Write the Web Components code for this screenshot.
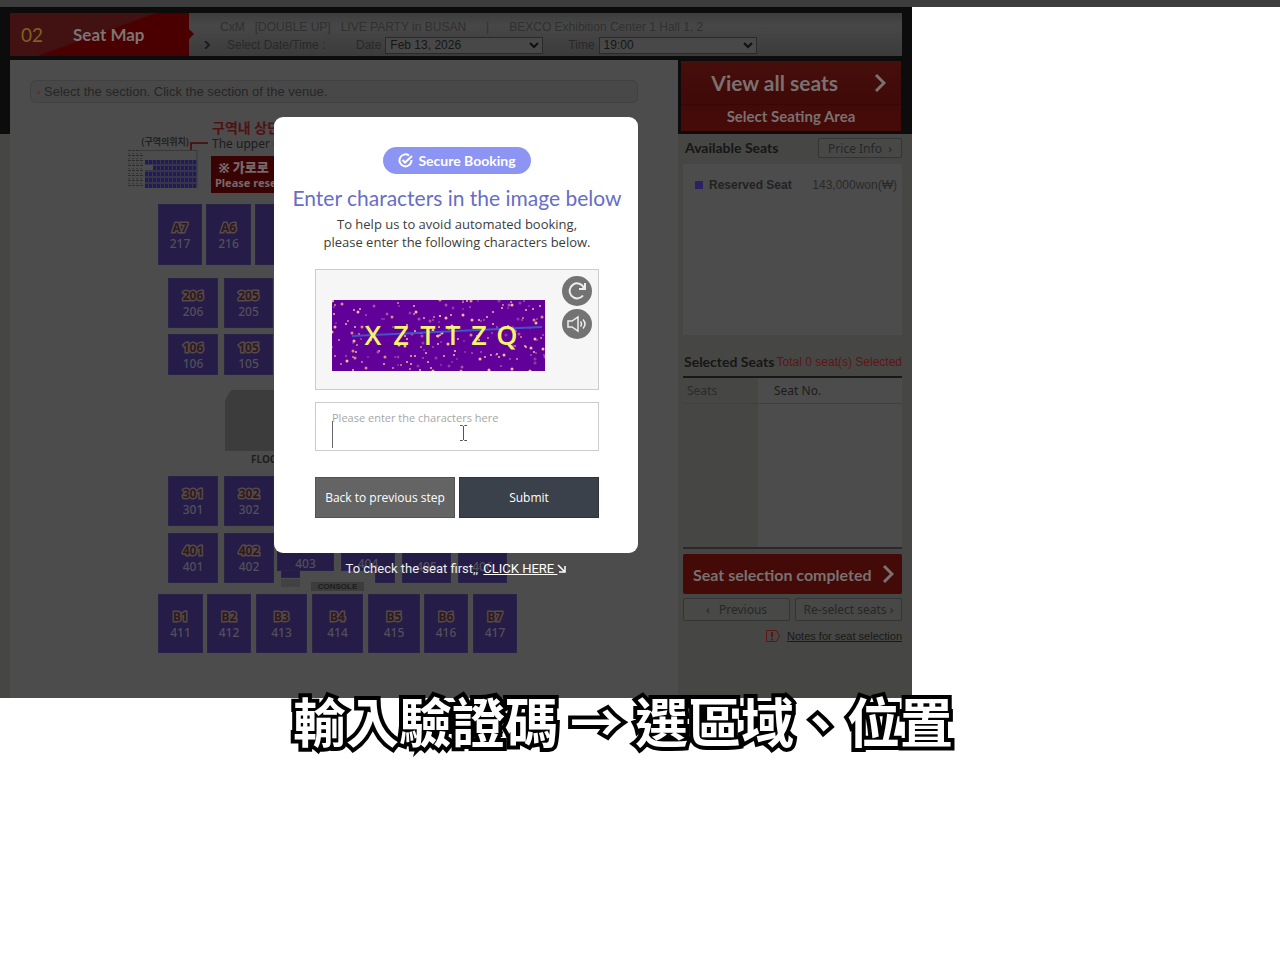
<!DOCTYPE html>
<html lang="en">
<head>
<meta charset="UTF-8">
<title>Seat Map</title>
<style>
  body {
    margin: 0;
    min-height: 100vh;
    background: #fff;
    font-family: "Liberation Sans", "Noto Sans CJK KR", sans-serif;
    font-size: 12px;
  }
</style>
</head>
<body>
<booking-page>
  <booking-header slot="header"></booking-header>
  <seat-plan slot="plan"></seat-plan>
  <seat-sidebar slot="side"></seat-sidebar>
  <captcha-dialog slot="dialog"></captcha-dialog>
  <video-caption slot="caption">輸入驗證碼 → 選區域、位置</video-caption>
</booking-page>

<script>
// page frame: strip on top, window on the left, overlay and caption over it
class BookingPage extends HTMLElement {
  constructor() {
    super();
    this.attachShadow({ mode: "open" });
    this.shadowRoot.innerHTML = `
      <style>
        :host { display: block; }
        .strip { height: 7px; background: #3d3d3d; }
        .window {
          position: relative;
          width: 71.25%;
          background: linear-gradient(#0c0c0c 127px, #464645 127px);
        }
        .body {
          display: grid;
          grid-template-columns: 1fr 234px;
          margin-left: 10px;
          min-height: 638px;
        }
        .overlay {
          position: absolute;
          inset: 0;
          display: flex;
          justify-content: center;
          align-items: flex-start;
          padding-top: 110px;
        }
        .caption { position: relative; margin-top: -16px; }
      </style>
      <div class="strip"></div>
      <div class="window">
        <slot name="header"></slot>
        <div class="body">
          <slot name="plan"></slot>
          <slot name="side"></slot>
        </div>
        <div class="overlay"><slot name="dialog"></slot></div>
      </div>
      <div class="caption"><slot name="caption"></slot></div>
    `;
  }
}
customElements.define("booking-page", BookingPage);

class BookingHeader extends HTMLElement {
  constructor() {
    super();
    this.attachShadow({ mode: "open" });
    this.shadowRoot.innerHTML = `
      <style>
        :host { display: block; padding: 6px 10px 4px; }
        header { display: flex; height: 43px; background: linear-gradient(#3d3d3d, #474747 30%, #3b3b3b); }
        .step {
          position: relative;
          display: flex;
          align-items: center;
          gap: 30px;
          width: 168px;
          padding-left: 11px;
          background: linear-gradient(160deg, #421212 48%, #4a0000 50%);
          color: #7b7573;
          font: bold 17px Lato, sans-serif;
        }
        .step b { color: #7d6126; font-size: 19px; font-weight: 400; }
        .step::after {
          content: "";
          position: absolute;
          left: 100%;
          top: 16px;
          border: 5px solid transparent;
          border-left-color: #4a0000;
          border-right: 0;
        }
        .info { flex: 1; padding: 6px 0 0 14px; color: #292929; }
        .title { display: flex; gap: 20px; padding-left: 17px; line-height: 16px; color: #303030; white-space: pre; }
        .when { display: flex; align-items: center; height: 20px; white-space: nowrap; }
        .when svg { margin-right: 16px; }
        .when span { width: 129px; }
        label { display: flex; align-items: center; gap: 4px; margin-right: 25px; }
        select {
          appearance: none;
          width: 158px;
          height: 17px;
          padding: 0 4px;
          border: 1px solid #2a2a2a;
          border-radius: 0;
          color: #161616;
          font: 12px "Liberation Sans", sans-serif;
          background: #484848;
        }
        .drop { position: relative; display: flex; }
        .drop svg { position: absolute; right: 4px; top: 5px; margin: 0; }
      </style>
      <header>
        <div class="step"><b>02</b>Seat Map</div>
        <div class="info">
          <div class="title"><span>CxM   [DOUBLE UP]   LIVE PARTY in BUSAN</span><span>|</span><span>BEXCO Exhibition Center 1 Hall 1, 2</span></div>
          <div class="when">
            <svg width="8" height="8" fill="none" stroke="#1c1c1c" stroke-width="2"><path d="M2 0l4 4-4 4"/></svg>
            <span>Select Date/Time :</span>
            <label>Date <div class="drop"><select><option>Feb 13, 2026</option></select>
              <svg width="10" height="7" fill="none" stroke="#101010" stroke-width="2"><path d="M1 1l4 4 4-4"/></svg></div></label>
            <label>Time <div class="drop"><select><option>19:00</option></select>
              <svg width="10" height="7" fill="none" stroke="#101010" stroke-width="2"><path d="M1 1l4 4 4-4"/></svg></div></label>
          </div>
        </div>
      </header>
    `;
  }
}
customElements.define("booking-header", BookingHeader);

// one block of the venue
class SeatSection extends HTMLElement {
  constructor() {
    super();
    this.attachShadow({ mode: "open" });
    this.shadowRoot.innerHTML = `
      <style>
        :host { display: block; position: absolute; }
        button {
          width: 100%;
          height: 100%;
          padding: 2px 0 0;
          border: 1px solid #2a2348;
          background: #251d47;
          color: #534f5b;
          font: 500 12px/16px "Noto Sans", sans-serif;
          cursor: pointer;
        }
        b {
          display: block;
          color: #30191c;
          -webkit-text-stroke: 3px #54494b;
          paint-order: stroke fill;
        }
      </style>
      <button><b><slot name="name"></slot></b><slot></slot></button>
    `;
  }
}
customElements.define("seat-section", SeatSection);

class SeatPlan extends HTMLElement {
  constructor() {
    super();
    this.attachShadow({ mode: "open" });
    // name, number, x, y, width, height on the plan
    const sections = [
      ["A7", "217", 148, 144, 44, 61], ["A6", "216", 196, 144, 45, 61], ["", "", 245, 144, 44, 61],
      ["206", "206", 158, 218, 50, 50], ["205", "205", 214, 218, 49, 50],
      ["106", "106", 158, 274, 50, 41], ["105", "105", 214, 274, 49, 41],
      ["301", "301", 158, 416, 50, 50], ["302", "302", 214, 416, 50, 50],
      ["401", "401", 158, 473, 50, 50], ["402", "402", 214, 473, 50, 50],
      ["", "", 271, 490, 19, 28], ["", "", 365, 490, 20, 33],
      ["", "403", 267, 477, 57, 34], ["", "404", 331, 477, 54, 34],
      ["", "405", 392, 473, 49, 50], ["", "406", 448, 473, 49, 50],
      ["B1", "411", 148, 534, 45, 59], ["B2", "412", 197, 534, 44, 59], ["B3", "413", 246, 534, 51, 59],
      ["B4", "414", 302, 534, 51, 59], ["B5", "415", 358, 534, 52, 59], ["B6", "416", 414, 534, 44, 59],
      ["B7", "417", 463, 534, 44, 59]
    ];
    const blocks = sections.map(([name, num, x, y, w, h]) =>
      `<seat-section style="left:${x}px;top:${y}px;width:${w}px;height:${h}px"><span slot="name">${name || "&nbsp;"}</span>${num}</seat-section>`
    ).join("");

    this.shadowRoot.innerHTML = `
      <style>
        :host { display: block; position: relative; background: #4c4c4c; overflow: hidden; }
        .hint {
          margin: 20px 40px 0 20px;
          padding: 0 5px;
          border: 1px solid #414141;
          border-radius: 6px;
          background: #484848;
          color: #262626;
          font-size: 13px;
          line-height: 21px;
        }
        .hint::before {
          content: "";
          display: inline-block;
          width: 3px;
          height: 3px;
          margin: 0 4px 2px 1px;
          background: #6b3210;
        }
        .free { position: absolute; white-space: nowrap; }
        .how { left: 202px; top: 60px; color: #1b1b1b; font: 12px/16px "Noto Sans", "Noto Sans CJK KR", sans-serif; }
        .how b { display: block; color: #4f1212; font-size: 14px; }
        .rule {
          left: 201px;
          top: 96px;
          width: 160px;
          padding: 3px 4px 2px;
          background: #3a0303;
          color: #77696a;
          font: bold 11px/16px "Noto Sans", "Noto Sans CJK KR", sans-serif;
        }
        .rule b { display: block; font-size: 13px; white-space: pre; }
        .where { left: 131px; top: 76px; color: #222; font: bold 9px/12px "Noto Sans CJK KR", sans-serif; }
        .mini { left: 118px; top: 82px; }
        .floor { left: 214px; top: 330px; }
        .floor-name { left: 241px; top: 392px; color: #1e1e1e; font: bold 10px/14px "Noto Sans", sans-serif; }
        .console {
          left: 301px;
          top: 522px;
          width: 53px;
          background: #3c3c3c;
          color: #1c1c1c;
          font: bold 8px/9px "Liberation Sans", sans-serif;
          text-align: center;
        }
        .foh { left: 271px; top: 519px; width: 19px; height: 8px; background: #424242; }
      </style>
      <div class="hint">Select the section. Click the section of the venue.</div>
      <div class="free where">(구역의위치)</div>
      <svg class="free mini" width="82" height="48">
        <defs>
          <pattern id="seats" width="4" height="6" patternUnits="userSpaceOnUse" x="17" y="18">
            <rect width="3" height="4" fill="#211b5c"/>
          </pattern>
          <pattern id="lines" width="4" height="5" patternUnits="userSpaceOnUse" y="8">
            <rect width="3" height="1" fill="#2c2c2c"/>
            <rect y="3" width="2" height="1" fill="#393939"/>
          </pattern>
        </defs>
        <rect y="8" width="15" height="38" fill="url(#lines)"/>
        <path d="M10 8.500h59v38" fill="none" stroke="#383838"/>
        <path d="M17 18h52v28H17V28h8v-5h-8z" fill="#37354a"/>
        <path d="M17 18h52v28H17V28h8v-5h-8z" fill="url(#seats)"/>
        <path d="M63 8V1h17" fill="none" stroke="#4b1515" stroke-width="2"/>
      </svg>
      <div class="free how"><b>구역내 상단</b>The upper e</div>
      <div class="free rule"><b> ※ 가로로</b>Please rese</div>
      <svg class="free floor" width="60" height="62"><path d="M1 61V13Q2 6 8 0h52v61z" fill="#3c3c3c"/></svg>
      <div class="free floor-name">FLOOR</div>
      ${blocks}
      <div class="free foh"></div>
      <div class="free console">CONSOLE</div>
    `;
  }
}
customElements.define("seat-plan", SeatPlan);

class SeatSidebar extends HTMLElement {
  constructor() {
    super();
    this.attachShadow({ mode: "open" });
    this.shadowRoot.innerHTML = `
      <style>
        :host { display: block; background: #464644; color: #1c1c1c; }
        button { padding: 0; cursor: pointer; }
        .top { padding: 1px 11px 3px 3px; background: #0c0c0c; }
        .all {
          display: block;
          width: 100%;
          border: 0;
          background: linear-gradient(#460f0c, #400a08 50%, #460b09);
          color: #7a7170;
          font-family: Lato, sans-serif;
          font-weight: bold;
        }
        .all span {
          display: flex;
          justify-content: flex-end;
          align-items: center;
          gap: 36px;
          padding-right: 15px;
          font-size: 21px;
          line-height: 43px;
          border-bottom: 1px solid #380808;
        }
        .all em { display: block; font-style: normal; font-size: 15px; line-height: 22px; padding-bottom: 4px; }
        .main { padding: 4px 10px 0 5px; }
        .line { display: flex; justify-content: space-between; align-items: center; }
        h2 { margin: 0 0 0 2px; color: #161616; font: bold 14px/20px Lato, sans-serif; white-space: nowrap; }
        .small {
          border: 1px solid #343434;
          border-radius: 2px;
          background: #484847;
          color: #272727;
          font: 12px "Noto Sans", sans-serif;
        }
        .price { width: 84px; height: 20px; }
        .list { height: 171px; margin-top: 6px; background: #4c4c4c; }
        .item { display: flex; align-items: center; padding: 13px 5px 0 12px; line-height: 16px; color: #2a2a2a; }
        .item i { width: 8px; height: 8px; margin-right: 6px; background: #2a2261; }
        .item b { flex: 1; color: #222; }
        .selected { margin-top: 17px; }
        .selected h2 { margin-left: 1px; }
        .selected span { color: #5c1616; white-space: nowrap; }
        table { width: 100%; margin-top: 4px; border-collapse: collapse; border-top: 2px solid #181818; border-bottom: 2px solid #292929; }
        th { height: 25px; padding: 0 0 0 16px; text-align: left; font: 12px "Noto Sans", sans-serif; background: #4c4c4c; border-bottom: 1px solid #404040; }
        th:first-child { width: 71px; padding: 0 0 0 4px; color: #2c2c2c; background: none; }
        td { height: 143px; padding: 0; background: #4c4c4c; }
        td:first-child { background: none; }
        .done {
          display: flex;
          justify-content: space-between;
          align-items: center;
          width: 100%;
          height: 40px;
          margin-top: 5px;
          padding: 0 8px 0 10px;
          border: 0;
          border-radius: 2px;
          background: #430a08;
          color: #7a7170;
          font: bold 16px Lato, sans-serif;
          white-space: nowrap;
        }
        .pair { display: grid; grid-template-columns: 1fr 1fr; gap: 5px; margin-top: 4px; }
        .pair .small { height: 23px; white-space: pre; }
        .notes { display: flex; justify-content: flex-end; align-items: center; gap: 6px; margin-top: 7px; }
        .notes a { color: #191919; font: 11px/16px "Liberation Sans", sans-serif; }
      </style>
      <div class="top">
        <button class="all">
          <span>View all seats
            <svg width="12" height="20" fill="none" stroke="#7a7170" stroke-width="3"><path d="M2 2l8 8-8 8"/></svg>
          </span>
          <em>Select Seating Area</em>
        </button>
      </div>
      <div class="main">
        <div class="line"><h2>Available Seats</h2><button class="small price">Price Info &nbsp;›</button></div>
        <div class="list"><div class="item"><i></i><b>Reserved Seat</b>143,000won(₩)</div></div>
        <div class="line selected"><h2>Selected Seats</h2><span>Total 0 seat(s) Selected</span></div>
        <table>
          <tr><th>Seats</th><th>Seat No.</th></tr>
          <tr><td></td><td></td></tr>
        </table>
        <button class="done">Seat selection completed
          <svg width="12" height="20" fill="none" stroke="#7a7170" stroke-width="3"><path d="M2 2l8 8-8 8"/></svg>
        </button>
        <div class="pair">
          <button class="small">‹   Previous</button>
          <button class="small">Re-select seats ›</button>
        </div>
        <div class="notes">
          <svg width="16" height="14" fill="none" stroke="#5a1717"><path d="M1.500 1.500h10l3 5.500-3 5.500h-10z"/><path d="M7 3v5M7 9.500v2" stroke-width="2"/></svg>
          <a href="#">Notes for seat selection</a>
        </div>
      </div>
    `;
  }
}
customElements.define("seat-sidebar", SeatSidebar);

// captcha picture with noise dots
class CaptchaImage extends HTMLElement {
  constructor() {
    super();
    this.attachShadow({ mode: "open" });
    let seed = 11;
    const rand = () => (seed = (seed * 16807) % 2147483647) / 2147483647;
    let dots = "";
    for (let i = 0; i < 210; i++) {
      const color = ["#f3b9a0", "#d98f80", "#8d3fa0", "#f0c08f", "#a255a5"][i % 5];
      dots += `<circle cx="${Math.round(rand() * 213)}" cy="${Math.round(rand() * 71)}" r="${i % 3 ? 1 : 1.5}" fill="${color}"/>`;
    }
    const letters = [["X", 41], ["Z", 69], ["T", 96], ["T", 121], ["Z", 147], ["Q", 175]]
      .map(([c, x]) => `<text x="${x}" y="45">${c}</text>`).join("");
    this.shadowRoot.innerHTML = `
      <style>
        :host { display: block; }
        svg { display: block; background: #62009a; }
        text { font: 600 27px "Open Sans", sans-serif; fill: #f7f36c; text-anchor: middle; }
      </style>
      <svg width="213" height="71">${dots}<path d="M20 36L210 27" stroke="#4055c8" stroke-width="2"/>${letters}</svg>
    `;
  }
}
customElements.define("captcha-image", CaptchaImage);

class CaptchaDialog extends HTMLElement {
  constructor() {
    super();
    this.attachShadow({ mode: "open" });
    this.shadowRoot.innerHTML = `
      <style>
        :host { display: block; width: 364px; text-align: center; }
        .card {
          box-sizing: border-box;
          padding: 30px 39px 35px 41px;
          border-radius: 9px;
          background: #fff;
        }
        .badge {
          display: inline-flex;
          align-items: center;
          gap: 5px;
          height: 27px;
          padding: 0 15px;
          border-radius: 14px;
          background: #8c95f4;
          color: #fff;
          font: bold 14px Lato, sans-serif;
        }
        h1 { margin: 9px -30px 0; color: #686dc6; font: 21px/30px Lato, sans-serif; white-space: nowrap; }
        p { margin: 2px -20px 0; color: #3c3c3c; font: 13px/18px "Open Sans", sans-serif; }
        .picture {
          display: flex;
          justify-content: space-between;
          height: 121px;
          box-sizing: border-box;
          margin-top: 18px;
          padding: 6px 6px 0 16px;
          border: 1px solid #ccc;
          background: #f6f6f6;
        }
        captcha-image { margin-top: 24px; }
        .tools { display: flex; flex-direction: column; gap: 3px; }
        .tools button {
          width: 30px;
          height: 30px;
          padding: 0;
          border: 0;
          border-radius: 50%;
          background: #737373;
        }
        .tools svg { display: block; margin: auto; }
        .field { position: relative; margin-top: 12px; }
        input {
          display: block;
          box-sizing: border-box;
          width: 100%;
          height: 49px;
          padding: 0 16px 18px;
          border: 1px solid #ccc;
          font: 11px "Open Sans", sans-serif;
          outline: 0;
        }
        input::placeholder { color: #a6a6a6; opacity: 1; }
        .caret { position: absolute; left: 17px; top: 19px; width: 1px; height: 27px; background: #666; }
        .pointer { position: absolute; left: 144px; top: 23px; }
        .actions { display: grid; grid-template-columns: 1fr 1fr; gap: 4px; margin-top: 26px; }
        .actions button {
          height: 41px;
          padding: 0;
          border: 1px solid #525252;
          background: #646464;
          color: #fff;
          font: 500 12px "Open Sans", sans-serif;
          white-space: nowrap;
        }
        .actions .submit { background: #3a414b; border-color: #2d343c; }
        .first { margin-top: 7px; color: #eee; font: 13px/18px Roboto, sans-serif; }
        .first a { margin-left: 2px; color: #fff; }
      </style>
      <div class="card">
        <div class="badge">
          <svg width="15" height="15" fill="none" stroke="#fff" stroke-width="2"><path d="M11 2.500A6 6 0 1 0 13.500 7"/><path d="M4.500 7L7 9.500 14 3"/></svg>
          Secure Booking
        </div>
        <h1>Enter characters in the image below</h1>
        <p>To help us to avoid automated booking,<br>please enter the following characters below.</p>
        <div class="picture">
          <captcha-image></captcha-image>
          <div class="tools">
            <button aria-label="Refresh"><svg width="20" height="20" fill="none" stroke="#eee" stroke-width="2"><path d="M16 14.500A7.500 7.500 0 1 1 17 7"/><path d="M18 2v6h-6"/></svg></button>
            <button aria-label="Listen"><svg width="22" height="18" fill="none" stroke="#eee" stroke-width="1.500"><path d="M2 6h4l6-4v14l-6-4H2z"/><path d="M14.500 6.500q2 2.500 0 5M17 4.500q4 4.500 0 9"/></svg></button>
          </div>
        </div>
        <div class="field">
          <input type="text" aria-label="Characters" placeholder="Please enter the characters here">
          <span class="caret"></span>
          <svg class="pointer" width="9" height="16" fill="none" stroke="#555"><path d="M1 .5h2.500l1 1 1-1H8M1 15.500h2.500l1-1 1 1H8M4.500 1v14"/></svg>
        </div>
        <div class="actions">
          <button>Back to previous step</button>
          <button class="submit">Submit</button>
        </div>
      </div>
      <div class="first">To check the seat first,, <a href="#">CLICK HERE
        <svg width="9" height="9" fill="none" stroke="#fff" stroke-width="1.500"><path d="M1 1l6 6M8 2v6H2"/></svg></a></div>
    `;
  }
}
customElements.define("captcha-dialog", CaptchaDialog);

class VideoCaption extends HTMLElement {
  constructor() {
    super();
    this.attachShadow({ mode: "open" });
    this.shadowRoot.innerHTML = `
      <style>
        :host {
          display: block;
          padding-right: 34px;
          color: #fff;
          font: bold 53px/76px "Noto Sans CJK TC", sans-serif;
          text-align: center;
          white-space: nowrap;
          -webkit-text-stroke: 8px #000;
          paint-order: stroke fill;
          stroke-linejoin: round;
        }
      </style>
      <slot></slot>
    `;
  }
}
customElements.define("video-caption", VideoCaption);
</script>
</body>
</html>
